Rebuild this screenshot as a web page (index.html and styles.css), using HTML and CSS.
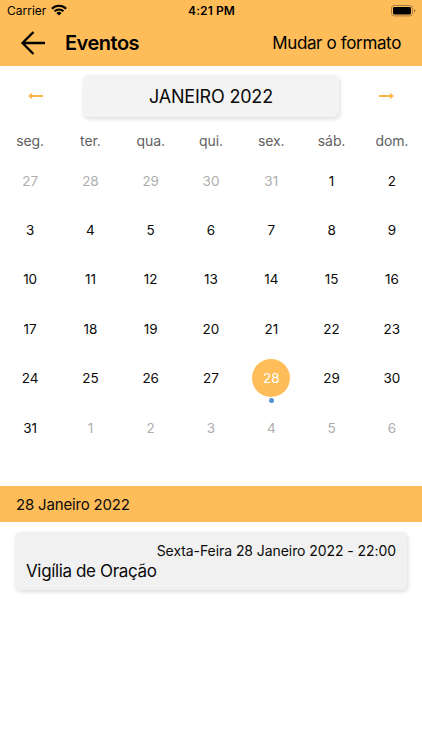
FILE: index.html
```
<!DOCTYPE html>
<html lang="pt">
<head>
<meta charset="utf-8">
<title>Eventos</title>
<link rel="stylesheet" href="styles.css">
</head>

<body>
<div class="top">
    <div class="status">
        <div class="carrier">
            <span>Carrier</span>
            <svg class="wifi" width="16" height="12" viewBox="0 0 16 12">
                <path d="M.9 4.7a10 10 0 0 1 14.2 0M3.5 7.3a6.5 6.5 0 0 1 9 0" fill="none" stroke="#000" stroke-width="2.1"/>
                <path d="M8 11.6L5.4 9a3.7 3.7 0 0 1 5.2 0z"/>
            </svg>
        </div>
        <div class="clock">4:21 PM</div>
        <svg class="battery" width="25" height="12" viewBox="0 0 25 12">
            <rect x="0.5" y="0.5" width="21" height="10.4" rx="2.8" fill="none" stroke="#a57c3d"/>
            <rect x="2" y="2" width="18" height="7.4" rx="1.4"/>
            <path d="M23 4v3.6q1.3-.6 1.3-1.8T23 4z" fill="#8f6c35"/>
        </svg>
    </div>
    <div class="nav">
        <svg class="back" width="26" height="26" viewBox="0 0 26 26">
            <path d="M13.5 2L2.5 13l11 11M2.5 13H25" fill="none" stroke="#000" stroke-width="2.3"/>
        </svg>
        <h1>Eventos</h1>
        <a class="format">Mudar o formato</a>
    </div>
</div>

<div class="calendar">
    <div class="month">
        <svg class="arrow" width="15" height="8" viewBox="0 0 15 8">
            <path d="M0 4L4.5.4l-.6 2.7H15v1.8H3.9l.6 2.7z"/>
        </svg>
        <div class="month_name">JANEIRO 2022</div>
        <svg class="arrow" width="15" height="8" viewBox="0 0 15 8">
            <path d="M15 4L10.5.4l.6 2.7H0v1.8h11.1l-.6 2.7z"/>
        </svg>
    </div>
    <div class="week">
        <span>seg.</span><span>ter.</span><span>qua.</span><span>qui.</span><span>sex.</span><span>sáb.</span><span>dom.</span>
    </div>
    <div class="days">
        <span class="out">27</span><span class="out">28</span><span class="out">29</span><span class="out">30</span><span class="out">31</span><span>1</span><span>2</span>
        <span>3</span><span>4</span><span>5</span><span>6</span><span>7</span><span>8</span><span>9</span>
        <span>10</span><span>11</span><span>12</span><span>13</span><span>14</span><span>15</span><span>16</span>
        <span>17</span><span>18</span><span>19</span><span>20</span><span>21</span><span>22</span><span>23</span>
        <span>24</span><span>25</span><span>26</span><span>27</span><span class="selected">28</span><span>29</span><span>30</span>
        <span>31</span><span class="out">1</span><span class="out">2</span><span class="out">3</span><span class="out">4</span><span class="out">5</span><span class="out">6</span>
    </div>
</div>

<h2 class="date">28 Janeiro 2022</h2>
<div class="event">
    <div class="event_time">Sexta-Feira 28 Janeiro 2022 - 22:00</div>
    <div class="event_name">Vigília de Oração</div>
</div>
</body>
</html>
```
FILE: styles.css
```
* { box-sizing: border-box; }
body { margin: 0; min-height: 100vh; background: #fff; color: #0a0a0a; font-family: Inter, "Liberation Sans", sans-serif; }
h1, h2 { margin: 0; }
svg { display: block; }

.top { height: 66px; background: #ffbd59; color: #000; }
.status { height: 22px; padding: 0 6px 0 7px; display: grid; grid-template-columns: 1fr auto 1fr; align-items: center; font-size: 12px; line-height: 22px; }
.carrier { display: flex; align-items: center; gap: 5px; }
.wifi { margin-top: -2px; }
.clock { font-weight: 600; letter-spacing: 0.1px; }
.battery { justify-self: end; margin-top: -1px; }
.nav { height: 44px; padding: 0 21px 2px 20px; display: flex; align-items: center; }
.nav h1 { margin-left: 19px; font-size: 20px; font-weight: 600; letter-spacing: -0.5px; }
.format { margin-left: auto; font-size: 17px; letter-spacing: -0.36px; }

.calendar { height: 420px; }
.month { padding: 9px 28px 0; display: flex; align-items: center; justify-content: space-between; }
.month_name { width: 256px; height: 42px; border-radius: 5px; background: #f3f3f3; box-shadow: 1px 2px 4px rgba(0, 0, 0, 0.14); font-size: 18px; line-height: 43px; letter-spacing: -0.2px; text-align: center; }
.arrow { fill: #fcb547; }
.week { margin-top: 14px; display: grid; grid-template-columns: repeat(7, 1fr); font-size: 14px; line-height: 20px; letter-spacing: -0.1px; text-align: center; color: #606060; }
.days { margin-top: 5px; display: grid; grid-template-columns: repeat(7, 1fr); grid-auto-rows: 49.4px; align-items: center; justify-items: center; font-size: 13.5px; }
.days .out { color: #aeaeae; }
.days .selected { position: relative; width: 38px; height: 38px; border-radius: 50%; background: #ffbd59; color: #fff; line-height: 38px; text-align: center; }
/* event marker under the day */
.selected::after { content: ""; position: absolute; left: 16.5px; top: 39px; width: 5px; height: 5px; border-radius: 50%; background: #5590d9; }

.date { height: 36px; padding-left: 16px; background: #ffbd59; font-size: 15px; font-weight: 400; line-height: 37px; letter-spacing: -0.18px; }
.event { margin: 10px 15px 0; height: 58px; padding: 9px 11px; border-radius: 5px; background: #f1f1f1; box-shadow: 1px 2px 4px rgba(0, 0, 0, 0.14); }
.event_time { font-size: 14px; line-height: 20px; letter-spacing: -0.07px; text-align: right; }
.event_name { font-size: 17px; line-height: 20px; letter-spacing: -0.36px; }
```
